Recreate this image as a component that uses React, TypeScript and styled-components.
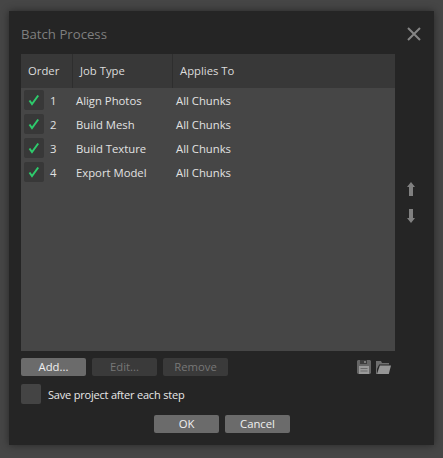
import React from "react";
import styled, {createGlobalStyle} from "styled-components";

const Global = createGlobalStyle`
  html, body {
    margin: 0;
    padding: 0;
    background: #464646;
    font-family: "Open Sans", "Noto Sans", sans-serif;
    overflow: hidden;
  }
`;

const Page = styled.div`
  width: 443px;
  height: 458px;
  padding: 11px 9px 13px 9px;
  box-sizing: border-box;
`;

const Dialog = styled.div`
  width: 425px;
  height: 434px;
  background: #252525;
  box-shadow: 0 0 8px rgba(0, 0, 0, 0.45);
  padding: 12px 12px 0 12px;
  box-sizing: border-box;
  position: relative;
  display: flex;
  flex-direction: column;
`;

const Title = styled.div`
  height: 31px;
  line-height: 22px;
  font-size: 13.2px;
  color: #7f7f7f;
`;

const CloseButton = styled.svg`
  position: absolute;
  top: 16px;
  right: 13px;
`;

const Middle = styled.div`
  display: flex;
  align-items: stretch;
`;

const Table = styled.div`
  width: 374px;
  height: 297px;
  background: #464646;
  display: flex;
  flex-direction: column;
`;

const HeaderRow = styled.div`
  height: 34px;
  flex: none;
  background: #383838;
  display: flex;
`;

const HeaderCell = styled.div<{$w: number; $pad: number}>`
  width: ${p => p.$w}px;
  box-sizing: border-box;
  padding-left: ${p => p.$pad}px;
  line-height: 34px;
  font-size: 11.3px;
  color: #dcdcdc;
  border-right: 1px solid #2e2e2e;
  &:last-child {
    border-right: 0;
  }
`;

const Rows = styled.div`
  padding-top: 2px;
  display: flex;
  flex-direction: column;
  gap: 4px;
`;

const Row = styled.div`
  height: 20px;
  display: flex;
  align-items: center;
  font-size: 11.3px;
  color: #e2e2e2;
`;

const RowCheck = styled.div`
  width: 20px;
  height: 20px;
  margin-left: 3px;
  background: #383838;
  border-radius: 2px;
  display: flex;
  align-items: center;
  justify-content: center;
`;

const OrderNum = styled.div`
  width: 32px;
  padding-left: 6px;
  box-sizing: border-box;
`;

const JobName = styled.div`
  width: 100px;
`;

const Arrows = styled.div`
  flex: 1;
  display: flex;
  flex-direction: column;
  align-items: center;
  gap: 13px;
  padding-top: 128px;
  padding-left: 4px;
  box-sizing: border-box;
`;

const ButtonBar = styled.div`
  margin-top: 7px;
  width: 374px;
  display: flex;
  align-items: center;
  gap: 6px;
`;

const Btn = styled.div<{$off?: boolean}>`
  width: 65px;
  height: 18px;
  line-height: 17px;
  text-align: center;
  font-size: 11.3px;
  border-radius: 2px;
  background: ${p => (p.$off ? "#3a3a3a" : "#6b6b6b")};
  color: ${p => (p.$off ? "#777777" : "#f0f0f0")};
`;

const FileIcons = styled.div`
  margin-left: auto;
  display: flex;
  align-items: center;
  gap: 5px;
  padding-right: 4px;
`;

const SaveRow = styled.div`
  margin-top: 8px;
  display: flex;
  align-items: center;
  gap: 7px;
  font-size: 11px;
  letter-spacing: -0.2px;
  color: #e8e8e8;
`;

const SaveCheck = styled.div`
  width: 20px;
  height: 20px;
  background: #444444;
  border-radius: 2px;
`;

const Footer = styled.div`
  margin-top: 11px;
  margin-left: 133px;
  display: flex;
  gap: 6px;
`;

const jobs = ["Align Photos", "Build Mesh", "Build Texture", "Export Model"];

const Check: React.FC = () => (
    <svg width="14" height="14" viewBox="0 0 14 14" fill="none">
        <path d="M2.5 7.5L5 11L11.2 2.5" stroke="#2ecb6c" strokeWidth="2"/>
    </svg>
);

const App: React.FC = () => {
    return (
        <Page>
            <Global/>
            <Dialog>
                <Title>Batch Process</Title>
                <CloseButton width="14" height="14" viewBox="0 0 14 14">
                    <path d="M1 1L13 13M13 1L1 13" stroke="#858585" strokeWidth="2"/>
                </CloseButton>
                <Middle>
                    <Table>
                        <HeaderRow>
                            <HeaderCell $w={52} $pad={7}>Order</HeaderCell>
                            <HeaderCell $w={100} $pad={7}>Job Type</HeaderCell>
                            <HeaderCell $w={222} $pad={7}>Applies To</HeaderCell>
                        </HeaderRow>
                        <Rows>
                            {jobs.map((job, i) => (
                                <Row key={job}>
                                    <RowCheck><Check/></RowCheck>
                                    <OrderNum>{i + 1}</OrderNum>
                                    <JobName>{job}</JobName>
                                    <div>All Chunks</div>
                                </Row>
                            ))}
                        </Rows>
                    </Table>
                    <Arrows>
                        <svg width="8" height="14" viewBox="0 0 8 14">
                            <path d="M4 0L8 5H6V14H2V5H0Z" fill="#808080"/>
                        </svg>
                        <svg width="8" height="14" viewBox="0 0 8 14">
                            <path d="M2 0H6V9H8L4 14L0 9H2Z" fill="#808080"/>
                        </svg>
                    </Arrows>
                </Middle>
                <ButtonBar>
                    <Btn>Add...</Btn>
                    <Btn $off>Edit...</Btn>
                    <Btn $off>Remove</Btn>
                    <FileIcons>
                        <svg width="14" height="14" viewBox="0 0 14 14">
                            <path fill="#666666" d="M1 0H13L14 1V13L13 14H1L0 13V1Z"/>
                            <path fill="#3c3c3c" d="M3 0H10V4H3Z"/>
                            <path fill="#7a7a7a" d="M7 1H9V3H7Z"/>
                            <path fill="#9a9a9a" d="M2 6H12V14H2Z"/>
                            <path fill="#6a6a6a" d="M3.5 8H10.5V9H3.5ZM3.5 10.5H10.5V11.5H3.5Z"/>
                        </svg>
                        <svg width="15" height="13" viewBox="0 0 15 13">
                            <path fill="#6f6f6f" d="M0 0H5L6 2H13V3.5H3.2L1 8V13H0Z"/>
                            <path fill="#969696" d="M3.8 4.5H15L12.8 13H1Z"/>
                        </svg>
                    </FileIcons>
                </ButtonBar>
                <SaveRow>
                    <SaveCheck/>
                    Save project after each step
                </SaveRow>
                <Footer>
                    <Btn>OK</Btn>
                    <Btn>Cancel</Btn>
                </Footer>
            </Dialog>
        </Page>
    );
};

export default App;
